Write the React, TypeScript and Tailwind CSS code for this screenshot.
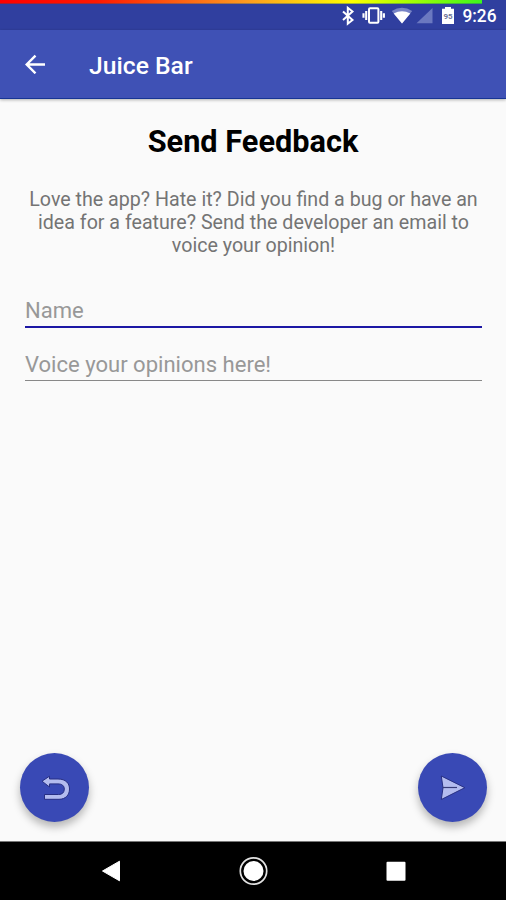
import React from "react";

function StatusBar() {
  return (
    <div className="relative h-[30px] bg-[#303f9f]">
      <div className="h-[4px] w-[482px] border-b border-[#1d4c88]/40 bg-[linear-gradient(90deg,#ff0000_0%,#ff1800_20%,#ff9a20_51%,#ffff00_73%,#b4ff00_83%,#3cf51e_100%)]" />
      <svg className="block" width="506" height="26" viewBox="0 4 506 26" fill="none">
        <path d="M343 11.5 352.5 20 347.8 23.7V7.8L352.5 11.5 343 20" stroke="#fff" strokeWidth="2" />
        <rect x="369" y="8.2" width="9.4" height="14.6" rx="1" stroke="#fff" strokeWidth="2" />
        <path d="M366.2 11v9M381.2 11v9M363.5 13.3v4.4M383.9 13.3v4.4" stroke="#fff" strokeWidth="2.1" />
        <path d="M402 23.5 391.8 11Q402 4.5 412.2 11Z" fill="#7783c5" />
        <path d="M402 23.5 393.7 13.6Q402 9 410.3 13.6Z" fill="#fff" />
        <path d="M432.5 8v15.3H416.5Z" fill="#6b78c0" />
        <path d="M442 8.8h3V7h6v1.8h3V24h-12Z" fill="#fff" />
        <text x="448" y="19" textAnchor="middle" fontFamily="Roboto" fontSize="8" fontWeight="700" fill="#6f7599">95</text>
        <text x="462.5" y="22" textLength="34" lengthAdjust="spacingAndGlyphs" fontFamily="Roboto" fontSize="18" fontWeight="500" fill="#fff">9:26</text>
      </svg>
    </div>
  );
}

function ActionBar() {
  return (
    <header className="relative flex h-[69px] items-center border-b border-[#173594] bg-[#3f51b5] pl-[25px] shadow-[0_1px_3px_rgba(0,0,0,0.3)]">
      <button aria-label="Back">
        <svg width="21" height="20" viewBox="0 0 21 20" fill="none" stroke="#fff" strokeWidth="2.4">
          <path d="M20 10.5H2M10.5 1.7 1.7 10.5l8.8 8.8" />
        </svg>
      </button>
      <h1 className="ml-[43px] pt-[4px] text-[24.7px] font-medium leading-8 text-white">Juice Bar</h1>
    </header>
  );
}

function Feedback() {
  return (
    <main className="flex flex-1 flex-col px-6 pt-[23px]">
      <h2 className="text-center text-[30.7px] font-bold leading-10 text-black">Send Feedback</h2>
      <p className="mt-[26px] whitespace-nowrap pl-px text-center text-[19.65px] leading-[23px] text-[#747474]">
        Love the app? Hate it? Did you find a bug or have an
        <br />
        idea for a feature? Send the developer an email to
        <br />
        voice your opinion!
      </p>
      <input
        className="mt-[38px] ml-px h-[33px] w-[457px] border-b-2 border-[#1c17a4] bg-transparent text-[22.05px] outline-none placeholder:text-[#989898] placeholder:opacity-100"
        placeholder="Name"
      />
      <input
        className="mt-[20px] ml-px h-[33px] w-[457px] border-b border-[#888888] bg-transparent pt-[2px] text-[22.05px] outline-none placeholder:text-[#989898] placeholder:opacity-100"
        placeholder="Voice your opinions here!"
      />
      <div className="-ml-[4px] -mr-[5px] mt-auto mb-[19px] flex justify-between">
        <button aria-label="Undo" className="h-[69px] w-[69px] rounded-full bg-[#3949b5] shadow-[0_5px_8px_rgba(0,0,0,0.28)]">
          <svg width="69" height="69" viewBox="20 753 69 69">
            <path
              d="M42 781.2 49.5 776.2V779H58C66 779 69.5 783.5 69.5 789C69.5 795 65.5 799.3 59 799.3H44.5V794.5H58.5C62.3 794.5 64.3 792.5 64.3 789C64.3 785.8 62 783.9 58 783.9H49.5V787Z"
              fill="#b4bcef"
              stroke="#272f83"
              strokeWidth="1"
              strokeLinejoin="round"
            />
          </svg>
        </button>
        <button aria-label="Send" className="h-[69px] w-[69px] rounded-full bg-[#3949b5] shadow-[0_5px_8px_rgba(0,0,0,0.28)]">
          <svg width="69" height="69" viewBox="418 753 69 69">
            <path d="M441.3 776 464.8 787.7 441.3 799.5 443 787.8Z" fill="#b4bcef" stroke="#272f83" strokeWidth="1" />
            <path d="M443 787.5h14" stroke="#383c78" strokeWidth="1.2" />
          </svg>
        </button>
      </div>
    </main>
  );
}

function NavigationBar() {
  return (
    <nav className="h-[59px] border-t border-[#777] bg-black">
      <svg width="506" height="58" viewBox="0 842 506 58">
        <path d="M102.5 871 119.5 861.2V880.8Z" fill="#fff" stroke="#fff" strokeLinejoin="round" />
        <circle cx="253.5" cy="871" r="13.2" fill="none" stroke="#e2e2e2" strokeWidth="1.7" />
        <circle cx="253.5" cy="871" r="10" fill="#fff" />
        <rect x="386.5" y="861.7" width="19" height="19" rx="1" fill="#fff" />
      </svg>
    </nav>
  );
}

export default function App() {
  return (
    <div className="flex h-[900px] w-[506px] flex-col overflow-hidden bg-[#fafafa] font-[Roboto,sans-serif]">
      <StatusBar />
      <ActionBar />
      <Feedback />
      <NavigationBar />
    </div>
  );
}
